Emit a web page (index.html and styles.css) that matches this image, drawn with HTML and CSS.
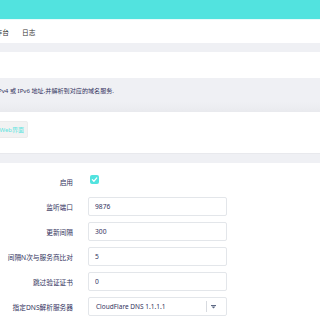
FILE: index.html
```html
<!DOCTYPE html>
<html lang="zh-CN">
<head>
    <meta charset="UTF-8">
    <meta name="viewport" content="width=device-width, initial-scale=1.0">
    <title>DDNS-GO</title>
    <link rel="stylesheet" href="styles.css">
</head>
<body>
    <div class="topbar"></div>

    <div class="tabs">
        <div class="clip-end tab-lead"><span class="tab">DDNS-GO操作台</span></div>
        <span class="tab">日志</span>
    </div>

    <div class="band"></div>

    <div class="title-row"></div>

    <div class="desc">
        <div class="clip-end desc-lead">
            <span class="desc-text">DDNS-GO自动获得你的公网 IPv4 或 IPv6 地址,并解析到对应的域名服务.</span>
        </div>
    </div>

    <div class="actions">
        <div class="clip-end btn-lead">
            <button class="open-btn">打开Web界面</button>
        </div>
    </div>

    <div class="band band-low"></div>

    <div class="form">
        <label class="field-label">启用</label>
        <div class="field"><span class="check"><svg width="7" height="7" viewBox="0 0 8 8"><path d="M1.5 4.2 L3.3 6 L6.6 2.2" fill="none" stroke="#fff" stroke-width="1.4" stroke-linecap="round" stroke-linejoin="round"/></svg></span></div>

        <label class="field-label">监听端口</label>
        <div class="field"><input class="text-input" type="text" value="9876"></div>

        <label class="field-label">更新间隔</label>
        <div class="field"><input class="text-input" type="text" value="300"></div>

        <label class="field-label">间隔N次与服务商比对</label>
        <div class="field"><input class="text-input" type="text" value="5"></div>

        <label class="field-label">跳过验证证书</label>
        <div class="field"><input class="text-input" type="text" value="0"></div>

        <label class="field-label">指定DNS解析服务器</label>
        <div class="field">
            <div class="select">
                <span class="select-value">CloudFlare DNS 1.1.1.1</span>
                <span class="select-sep"></span>
                <svg class="select-arrow" width="5" height="4" viewBox="0 0 5 4"><rect x="0" y="0" width="5" height="1" fill="#5e6a85"/><path d="M0.5 1.6 L4.5 1.6 L2.5 3.6 Z" fill="#5e6a85"/></svg>
            </div>
        </div>
    </div>
</body>
</html>
```

FILE: styles.css
```css
body {
    margin: 0;
    font-family: "Noto Sans", "Noto Sans CJK SC", sans-serif;
    color: #32325d;
    background-color: #fff;
    overflow: hidden;
}
.clip-end {
    display: flex;
    justify-content: flex-end;
    flex-shrink: 0;
    white-space: nowrap;
}
.clip-end > * {
    flex-shrink: 0;
}
.topbar {
    height: 19px;
    background-color: #52e3df;
    border-bottom: 1px solid #e9fbfb;
}
.tabs {
    height: 23px;
    display: flex;
    align-items: center;
    gap: 13px;
    background-color: #fff;
    font-size: 6.7px;
    color: #333;
}
.tab-lead {
    width: 9px;
}
.band {
    height: 9px;
    background-color: #eff0f4;
}
.band-low {
    height: 10px;
    border-top: 1px solid #e8e9ed;
    box-sizing: border-box;
}
.title-row {
    height: 26px;
    background-color: #fff;
}
.desc {
    height: 34px;
    background: linear-gradient(to bottom, #eff0f4 0, #eff0f4 24px, #e9eaee 34px);
    font-size: 6.1px;
    padding-top: 8px;
    box-sizing: border-box;
}
.desc-lead {
    width: 114px;
}
.actions {
    height: 41px;
    padding-top: 9px;
    box-sizing: border-box;
}
.btn-lead {
    width: 28px;
}
.open-btn {
    height: 17px;
    padding: 0 3px 0 5px;
    border: 1px solid #ececec;
    border-radius: 2px;
    background-color: #f2f2f2;
    color: #5fe4e0;
    font-family: "Noto Sans", "Noto Sans CJK SC", sans-serif;
    font-size: 6px;
}
.form {
    display: grid;
    grid-template-columns: 73px 139px;
    column-gap: 15px;
    row-gap: 6px;
    padding-top: 9px;
}
.field-label {
    display: flex;
    align-items: center;
    justify-content: flex-end;
    height: 19px;
    font-size: 6.7px;
    color: #32325d;
    white-space: nowrap;
}
.field {
    display: flex;
    align-items: center;
    height: 19px;
}
.check {
    width: 9px;
    height: 9px;
    margin-left: 2px;
    margin-top: -4px;
    border-radius: 2px;
    background-color: #52e3df;
    display: flex;
    align-items: center;
    justify-content: center;
}
.text-input {
    width: 100%;
    height: 19px;
    box-sizing: border-box;
    border: 1px solid #e3e6ea;
    border-radius: 2px;
    padding: 0 6px;
    font-family: "Noto Sans", "Noto Sans CJK SC", sans-serif;
    font-size: 6.7px;
    color: #32325d;
    background-color: #fff;
}
.select {
    width: 100%;
    height: 19px;
    box-sizing: border-box;
    border: 1px solid #e3e6ea;
    border-radius: 2px;
    display: flex;
    align-items: center;
    padding-left: 7px;
    font-size: 6.5px;
}
.select-value {
    flex-grow: 1;
    white-space: nowrap;
}
.select-sep {
    width: 1px;
    height: 11px;
    background-color: #d8dbe0;
    margin-right: 4px;
}
.select-arrow {
    margin-right: 10px;
}
```
